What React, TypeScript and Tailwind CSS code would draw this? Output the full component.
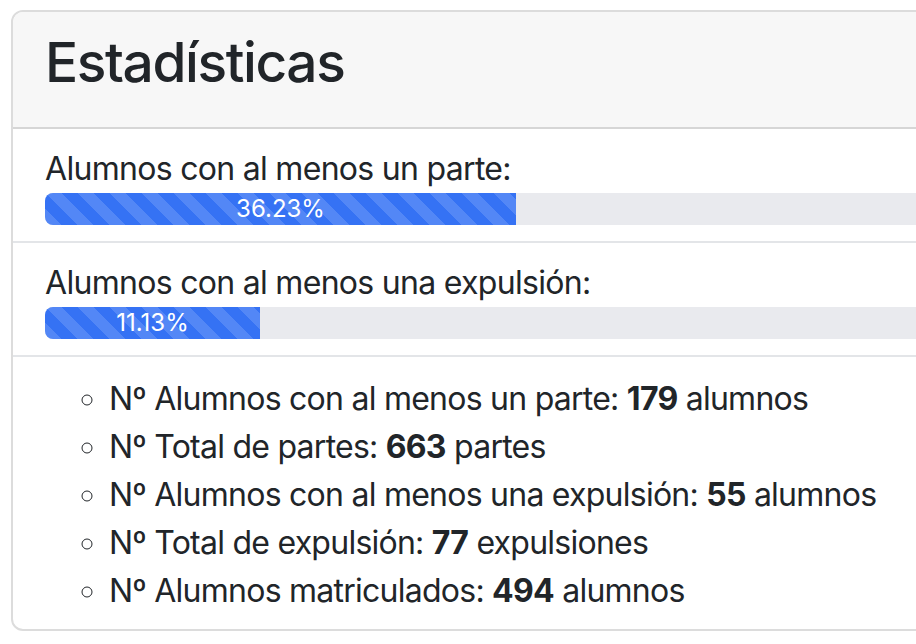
export default function App() {
  const bars = [
    { label: "Alumnos con al menos un parte:", value: "36.23%", width: 471 },
    { label: "Alumnos con al menos una expulsión:", value: "11.13%", width: 215 },
  ];

  const stats = [
    { text: "Nº Alumnos con al menos un parte: ", num: "179", unit: " alumnos" },
    { text: "Nº Total de partes: ", num: "663", unit: " partes" },
    { text: "Nº Alumnos con al menos una expulsión: ", num: "55", unit: " alumnos" },
    { text: "Nº Total de expulsión: ", num: "77", unit: " expulsiones" },
    { text: "Nº Alumnos matriculados: ", num: "494", unit: " alumnos" },
  ];

  const stripes =
    "bg-[#3572f4] bg-[linear-gradient(45deg,rgba(255,255,255,0.15)_25%,transparent_25%,transparent_50%,rgba(255,255,255,0.15)_50%,rgba(255,255,255,0.15)_75%,transparent_75%,transparent)] bg-[length:32px_32px]";

  return (
    <div
      className="w-[916px] h-[644px] overflow-hidden bg-white text-[#212529]"
      style={{ fontFamily: "Inter, 'Noto Sans', sans-serif" }}
    >
      <div className="ml-[11px] mt-[10px] w-[1400px] rounded-[12px] border-2 border-[#dcdcdc] overflow-hidden">
        <div className="bg-[#f7f7f7] px-[32px] pt-[17px] pb-[15px] border-b-2 border-[#d6d6d6]">
          <h3 className="text-[55px] leading-[67px] font-medium mb-[16px] tracking-[-1.4px]">
            Estadísticas
          </h3>
        </div>
        {bars.map((b) => (
          <div key={b.label} className="px-[32px] py-[16px] border-b-2 border-[#e3e5e8]">
            <div className="text-[32px] leading-[48px] tracking-[-0.7px]">{b.label}</div>
            <div className="h-[32px] w-[1300px] bg-[#e9eaee] rounded-[8px] overflow-hidden flex">
              <div
                className={`${stripes} h-full flex items-center justify-center text-white text-[24px] leading-none`}
                style={{ width: b.width }}
              >
                {b.value}
              </div>
            </div>
          </div>
        ))}
        <div className="px-[32px] pt-[18px] pb-[14px]">
          <ul className="list-[circle] pl-[64px] text-[32px] leading-[48px] tracking-[-0.75px]">
            {stats.map((s) => (
              <li key={s.text}>
                {s.text}
                <b className="font-bold">{s.num}</b>
                {s.unit}
              </li>
            ))}
          </ul>
        </div>
      </div>
    </div>
  );
}
